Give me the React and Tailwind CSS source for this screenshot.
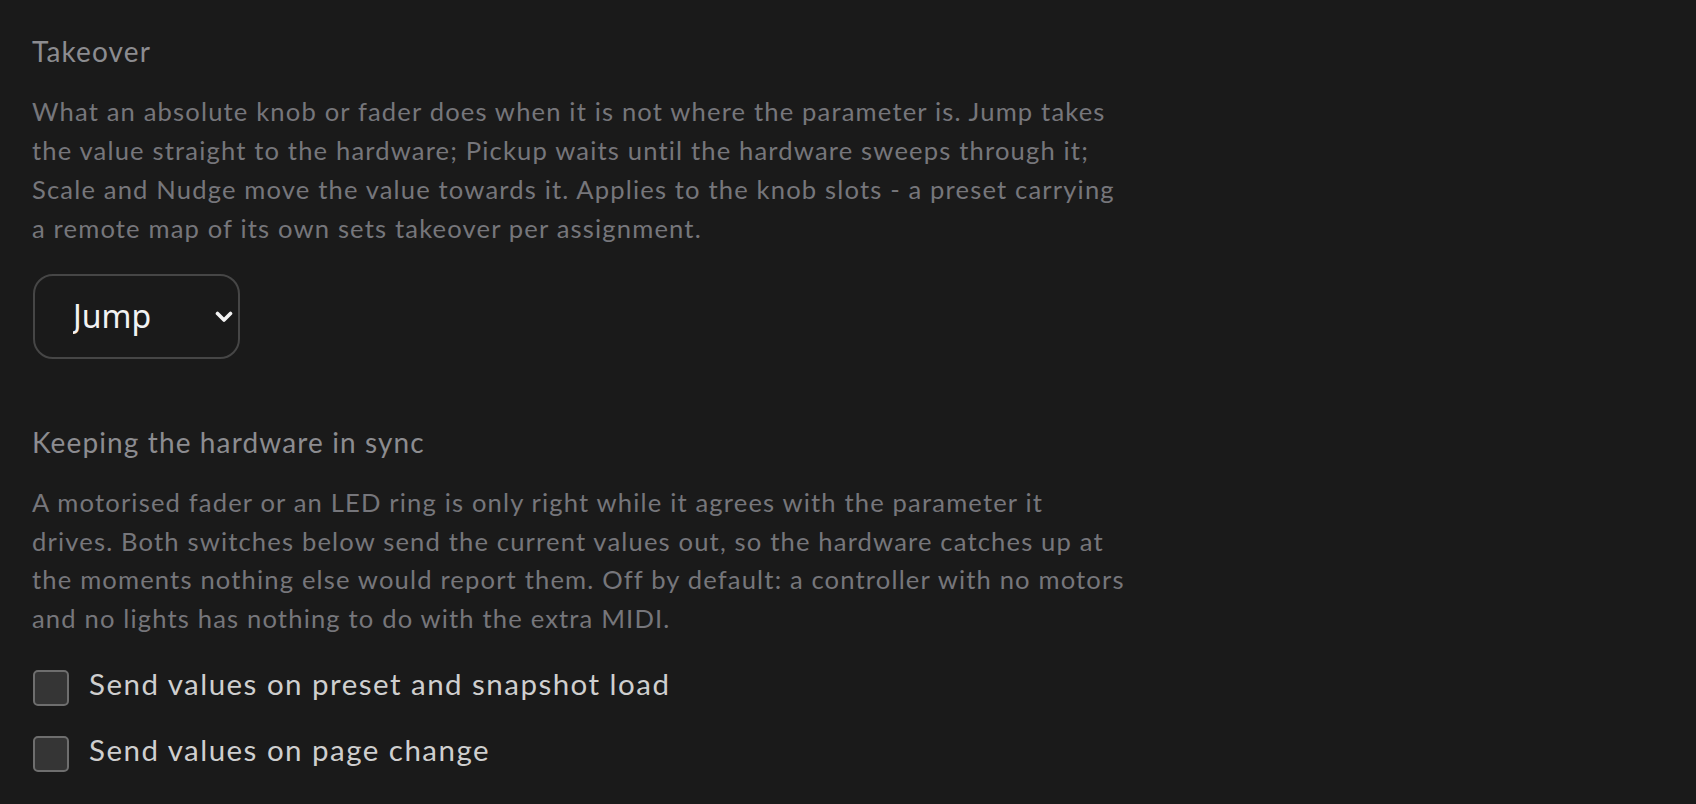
import { useState } from 'react';

function Checkbox({ label }) {
    const [checked, setChecked] = useState(false);
    return (
        <label className="flex items-center gap-[20px] h-[44px] cursor-pointer">
            <input
                type="checkbox"
                checked={checked}
                onChange={() => setChecked(!checked)}
                className="appearance-none w-[36px] h-[36px] mt-[7px] ml-[1px] rounded-[5px] border-2 border-[#6e6e6e] bg-[#353535] checked:bg-[#5a5a5a] shrink-0"
            />
            <span className="text-[29.5px] leading-[44px] tracking-[0.05em] text-[#cfcfcf]">{label}</span>
        </label>
    );
}

export default function App() {
    const [takeover, setTakeover] = useState('Jump');

    return (
        <div
            className="min-h-screen bg-[#1a1a1a] pl-[32px] pt-[30px]"
            style={{ fontFamily: 'Lato, "Noto Sans", sans-serif' }}
        >
            <div className="max-w-[1100px]">
                <h2 className="text-[28px] leading-[42px] font-normal tracking-[0.04em] text-[#8c8c90]">Takeover</h2>
                <p className="mt-[20px] text-[25.6px] leading-[38.9px] tracking-[0.045em] text-[#76767b]">
                    What an absolute knob or fader does when it is not where the parameter is. Jump takes
                    the value straight to the hardware; Pickup waits until the hardware sweeps through it;
                    Scale and Nudge move the value towards it. Applies to the knob slots - a preset carrying
                    a remote map of its own sets takeover per assignment.
                </p>

                <div className="relative mt-[26px] ml-[1px] w-[207px] h-[85px]">
                    <select
                        value={takeover}
                        onChange={e => setTakeover(e.target.value)}
                        className="appearance-none w-full h-full rounded-[20px] border-2 border-[#464646] bg-[#1a1a1a] pl-[38px] text-[32px] text-[#f2f2f2] outline-none"
                        style={{ fontFamily: '"Noto Sans", sans-serif' }}
                    >
                        <option>Jump</option>
                        <option>Pickup</option>
                        <option>Scale</option>
                        <option>Nudge</option>
                    </select>
                    <svg
                        className="pointer-events-none absolute left-[182px] top-[37px]"
                        width="18"
                        height="12"
                        viewBox="0 0 18 12"
                        fill="none"
                    >
                        <path d="M2.5 2.5 L9 9 L15.5 2.5" stroke="#f2f2f2" strokeWidth="3.6" strokeLinecap="round" strokeLinejoin="round" />
                    </svg>
                </div>

                <h2 className="mt-[62px] text-[28px] leading-[42px] font-normal tracking-[0.04em] text-[#8c8c90]">Keeping the hardware in sync</h2>
                <p className="mt-[20px] text-[25.6px] leading-[38.9px] tracking-[0.045em] text-[#76767b]">
                    A motorised fader or an LED ring is only right while it agrees with the parameter it
                    drives. Both switches below send the current values out, so the hardware catches up at
                    the moments nothing else would report them. Off by default: a controller with no motors
                    and no lights has nothing to do with the extra MIDI.
                </p>

                <div className="mt-[24px] flex flex-col gap-[22px]">
                    <Checkbox label="Send values on preset and snapshot load" />
                    <Checkbox label="Send values on page change" />
                </div>
            </div>
        </div>
    );
}
